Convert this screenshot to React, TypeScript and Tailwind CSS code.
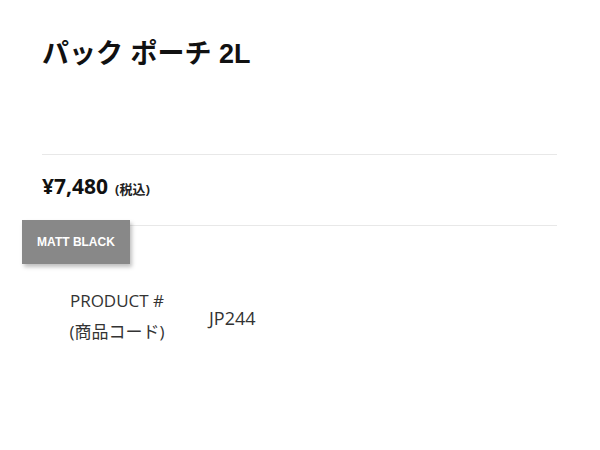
import React from 'react';

// Product summary block
const App: React.FC = () => {
    return (
        <div className="w-[600px] h-[450px] bg-white overflow-hidden" style={{ fontFamily: '"Open Sans", "Noto Sans CJK JP", sans-serif' }}>
            <div className="pl-[42px] pr-[43px] pt-[34px]">
                <h1 className="text-[27px] leading-[40px] font-bold text-[#111]" style={{ fontFamily: '"Liberation Sans", "Noto Sans CJK JP", sans-serif' }}>パック ポーチ 2L</h1>

                {/* faint placeholder rows */}
                <div className="h-[80px]"></div>

                <div className="border-t border-[#e8e8e8]"></div>

                <div className="flex items-baseline gap-[7px] pt-[15px] pb-[23px]">
                    <span className="text-[21px] font-bold text-[#111] leading-[32px]">¥7,480</span>
                    <span className="text-[13px] font-bold text-[#222]">(税込)</span>
                </div>

                <div className="border-t border-[#e8e8e8]"></div>
            </div>

            <div className="-mt-[6px] ml-[22px]">
                <div className="inline-flex items-center justify-center w-[108px] h-[44px] bg-[#888888] text-white text-[12px] font-bold shadow-[2px_3px_4px_rgba(0,0,0,0.25)]" style={{ fontFamily: '"Liberation Sans", sans-serif' }}>
                    MATT BLACK
                </div>
            </div>

            <div className="flex items-center mt-[21px] pl-[60px]">
                <div className="w-[114px] text-center text-[17px] leading-[31px] text-[#333]">
                    <div>PRODUCT #</div>
                    <div>(商品コード)</div>
                </div>
                <div className="ml-[35px] mt-[4px] text-[18px] text-[#333]">JP244</div>
            </div>
        </div>
    );
};

export default App;
